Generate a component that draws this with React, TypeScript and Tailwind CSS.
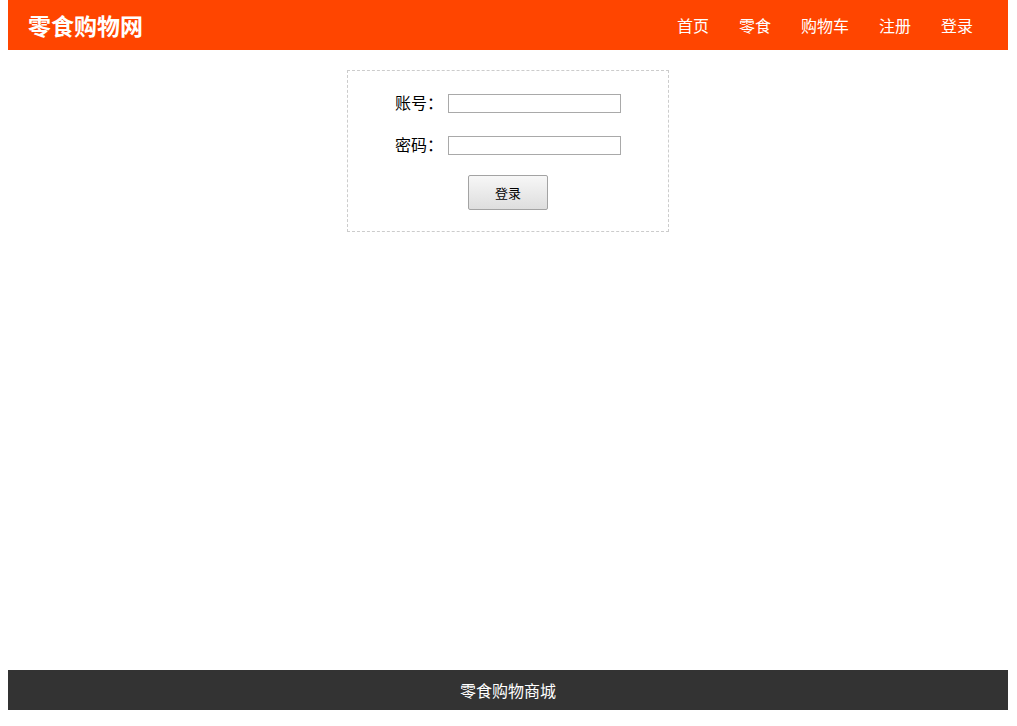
import React from "react";

const font = { fontFamily: '"Microsoft YaHei", "Noto Sans CJK SC", "Noto Sans", sans-serif' };

export default function App() {
  return (
    <div className="min-h-[726px] w-[1000px] ml-2 flex flex-col pb-4 bg-white" style={font}>
      <header className="h-[50px] bg-[#ff4500] flex items-center justify-between pl-5 pr-[35px] text-white">
        <div className="text-[23px] font-bold leading-none">零食购物网</div>
        <nav className="flex items-center gap-[30px] text-[16px] leading-none -mt-[1px]">
          <a>首页</a>
          <a>零食</a>
          <a>购物车</a>
          <a>注册</a>
          <a>登录</a>
        </nav>
      </header>
      <main className="flex-1 flex justify-center pt-5">
        <div className="w-[322px] h-[162px] border border-dashed border-[#cccccc] flex flex-col items-center">
          <div className="mt-[23px] flex items-center h-[19px]">
            <span className="w-[48px] text-[16px] leading-none text-black -mt-[3px]">账号：</span>
            <input className="ml-[5px] w-[173px] h-[19px] border border-[#a9a9a9] bg-white outline-none" />
          </div>
          <div className="mt-[23px] flex items-center h-[19px]">
            <span className="w-[48px] text-[16px] leading-none text-black -mt-[3px]">密码：</span>
            <input type="password" className="ml-[5px] w-[173px] h-[19px] border border-[#a9a9a9] bg-white outline-none" />
          </div>
          <button className="mt-[20px] w-[80px] h-[35px] border border-[#a3a3a3] rounded-[2px] bg-gradient-to-b from-[#f7f7f7] to-[#dedede] text-[13px] text-black leading-none">
            登录
          </button>
        </div>
      </main>
      <footer className="h-[40px] bg-[#333333] flex items-center justify-center text-white text-[16px] leading-none">
        零食购物商城
      </footer>
    </div>
  );
}
